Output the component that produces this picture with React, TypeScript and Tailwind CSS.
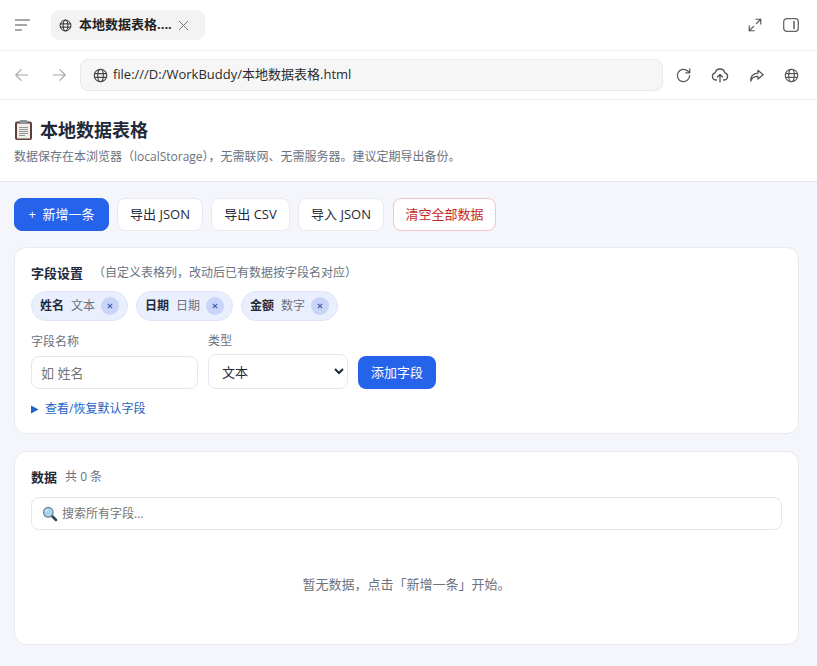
import React from "react";

const Globe = ({ size = 16, className = "" }: { size?: number; className?: string }) => (
  <svg width={size} height={size} viewBox="0 0 16 16" fill="none" stroke="currentColor" strokeWidth="1.2" className={className}>
    <circle cx="8" cy="8" r="6.7" />
    <ellipse cx="8" cy="8" rx="3" ry="6.7" />
    <path d="M1.5 6h13M1.5 10h13" />
  </svg>
);

const Icon = ({ size = 18, children, className = "" }: { size?: number; children: React.ReactNode; className?: string }) => (
  <svg width={size} height={size} viewBox="0 0 18 18" fill="none" stroke="currentColor" strokeWidth="1.3" strokeLinecap="round" strokeLinejoin="round" className={className}>
    {children}
  </svg>
);

const Clipboard = () => (
  <svg width="20" height="22" viewBox="0 0 20 22" className="shrink-0">
    <rect x="1" y="2.5" width="17" height="18.5" rx="2" fill="#5d4037" />
    <rect x="3" y="4.5" width="13" height="15" fill="#f1efe9" />
    <rect x="5.5" y="1" width="8" height="4" rx="1" fill="#8d9399" />
    <path d="M5 8.5h9M5 10.5h9M5 12.5h9M5 14.5h9M5 16.5h6" stroke="#8a8a86" strokeWidth="0.9" />
  </svg>
);

const Magnifier = () => (
  <svg width="16" height="16" viewBox="0 0 16 16" className="shrink-0">
    <path d="M9.5 9.5 14 14" stroke="#37474f" strokeWidth="2.6" strokeLinecap="round" />
    <circle cx="6.3" cy="6.3" r="4.8" fill="#a8d4ee" stroke="#6d8796" strokeWidth="1.3" />
    <path d="M3.6 6a2.8 2.8 0 0 1 2.4-2.4" stroke="#e8f6ff" strokeWidth="1" fill="none" />
  </svg>
);

const Chip = ({ name, type }: { name: string; type: string }) => (
  <div className="flex h-[30px] items-center rounded-full border border-[#dfe5f7] bg-[#eaeffd] pl-[8px] pr-[8px] text-[12px]">
    <b className="font-bold text-[#1f2937]">{name}</b>
    <span className="ml-[7px] text-[#6b7280]">{type}</span>
    <span className="ml-[6px] flex h-[18px] w-[18px] items-center justify-center rounded-full bg-[#c9d5f8] text-[#3b5aa8]">
      <svg width="8" height="8" viewBox="0 0 8 8" stroke="currentColor" strokeWidth="1.1">
        <path d="M1.8 1.8l4.4 4.4M6.2 1.8 1.8 6.2" />
      </svg>
    </span>
  </div>
);

const Btn = ({ children, className = "" }: { children: React.ReactNode; className?: string }) => (
  <button className={`flex h-[33px] items-center justify-center rounded-[8px] border text-[13px] ${className}`}>{children}</button>
);

export default function App() {
  return (
    <div
      className="flex h-[666px] w-[817px] flex-col overflow-hidden bg-[#f4f6fb] text-[#1f2937]"
      style={{ fontFamily: '"Open Sans", "Noto Sans CJK SC", sans-serif' }}
    >
      <div className="flex h-[51px] shrink-0 items-center border-b border-[#f0f0f0] bg-white pl-[15px] pr-[18px]">
        <svg width="15" height="14" viewBox="0 0 15 14" stroke="#8a8a8a" strokeWidth="1.6" fill="none">
          <path d="M0 2h15M0 7h12M0 12h7" />
        </svg>
        <div className="ml-[21px] flex h-[30px] w-[154px] items-center rounded-[8px] bg-[#f3f3f3] pl-[8px]">
          <Globe size={13} className="text-[#222]" />
          <span className="ml-[7px] text-[13px] font-bold text-[#222]">本地数据表格....</span>
          <svg width="11" height="11" viewBox="0 0 11 11" stroke="#777" strokeWidth="1" className="ml-[6px]">
            <path d="M1 1l9 9M10 1l-9 9" />
          </svg>
        </div>
        <div className="ml-auto flex items-center gap-[20px] text-[#555]">
          <Icon size={16}>
            <path d="M10 2.5h5.5V8M15.5 2.5 10.5 7.5M8 15.5H2.5V10M2.5 15.5l5-5" />
          </Icon>
          <svg width="16" height="14" viewBox="0 0 16 14" fill="none" stroke="#666" strokeWidth="1.3">
            <rect x="0.7" y="0.7" width="14.6" height="12.6" rx="3" />
            <path d="M11 3v8" strokeWidth="1.6" />
          </svg>
        </div>
      </div>

      <div className="flex h-[49px] shrink-0 items-center border-b border-[#ececec] bg-white pl-[14px] pr-[18px]">
        <Icon size={16} className="text-[#a8a8a8]">
          <path d="M15.5 9H2.5M8 3 2 9l6 6" />
        </Icon>
        <Icon size={16} className="ml-[21px] text-[#a8a8a8]">
          <path d="M2.5 9h13M10 3l6 6-6 6" />
        </Icon>
        <div className="ml-[13px] flex h-[32px] w-[585px] items-center rounded-[8px] border border-[#e9e9e9] bg-[#f6f6f6] pl-[12px] text-[13px] text-[#2a2a2a]">
          <Globe size={15} className="text-[#444]" />
          <span className="ml-[5px]">file:///D:/WorkBuddy/本地数据表格.html</span>
        </div>
        <div className="ml-[12px] flex items-center gap-[19px] text-[#555]">
          <Icon size={17}>
            <path d="M15.5 9a6.5 6.5 0 1 1-2-4.7l2 1.9M15.6 2v4.2h-4.2" />
          </Icon>
          <Icon size={18}>
            <path d="M5.5 14H4.8a3.6 3.6 0 0 1-.6-7.1 4.9 4.9 0 0 1 9.6 0 3.6 3.6 0 0 1-.6 7.1h-.7M9 16V8.5M6.5 11 9 8.5l2.5 2.5" />
          </Icon>
          <Icon size={17}>
            <path d="M10.5 3.5 16 8.2l-5.5 4.6V10C6.5 10 4 11.5 3 15c-.3-4.5 2-8 7.5-8.4z" />
          </Icon>
          <Globe size={15} className="text-[#555]" />
        </div>
      </div>

      <div className="h-[82px] shrink-0 border-b border-[#e5e7eb] bg-white px-[14px] pt-[17px]">
        <div className="flex h-[26px] items-center gap-[6px]">
          <Clipboard />
          <h1 className="text-[18px] font-bold leading-[26px] text-[#1f2937]">本地数据表格</h1>
        </div>
        <p className="mt-[6px] text-[12px] leading-[16px] text-[#6b7280]">数据保存在本浏览器（localStorage），无需联网、无需服务器。建议定期导出备份。</p>
      </div>

      <div className="flex flex-col px-[14px] pt-[16px]">
        <div className="flex items-center gap-[8px]">
          <Btn className="w-[95px] border-[#2563eb] bg-[#2563eb] text-white">+&nbsp;&nbsp;新增一条</Btn>
          <Btn className="w-[86px] border-[#e8eaef] bg-white text-[#1f2937]">导出 JSON</Btn>
          <Btn className="w-[79px] border-[#e8eaef] bg-white text-[#1f2937]">导出 CSV</Btn>
          <Btn className="w-[86px] border-[#e8eaef] bg-white text-[#1f2937]">导入 JSON</Btn>
          <Btn className="ml-[1px] w-[103px] border-[#f3c6c9] bg-white text-[#c62828]">清空全部数据</Btn>
        </div>

        <section className="mt-[16px] h-[187px] w-[785px] rounded-[12px] border border-[#e8eaef] bg-white px-[16px] pt-[15px]">
          <div className="flex items-center">
            <h2 className="text-[13px] font-bold leading-[20px]">字段设置</h2>
            <span className="ml-[10px] text-[12px] leading-[20px] text-[#6b7280]">（自定义表格列，改动后已有数据按字段名对应）</span>
          </div>
          <div className="mt-[8px] flex gap-[8px]">
            <Chip name="姓名" type="文本" />
            <Chip name="日期" type="日期" />
            <Chip name="金额" type="数字" />
          </div>
          <div className="mt-[12px] flex items-end gap-[10px]">
            <label className="flex w-[167px] flex-col">
              <span className="text-[12px] leading-[16px] text-[#6b7280]">字段名称</span>
              <input placeholder="如 姓名" className="mt-[6px] h-[33px] rounded-[8px] border border-[#e5e7eb] bg-white px-[9px] text-[13px] placeholder:text-[#757575]" />
            </label>
            <label className="flex w-[140px] flex-col">
              <span className="text-[12px] leading-[16px] text-[#6b7280]">类型</span>
              <select className="mt-[5px] h-[35px] rounded-[8px] border border-[#e5e7eb] bg-white px-[9px] text-[13px]">
                <option>文本</option>
              </select>
            </label>
            <button className="h-[33px] w-[78px] rounded-[8px] bg-[#2563eb] text-[13px] text-white">添加字段</button>
          </div>
          <div className="mt-[12px] flex items-center text-[12px] leading-[16px] text-[#2563c4]">
            <svg width="8" height="9" viewBox="0 0 8 9" fill="currentColor"><path d="M0 .5v8l7.5-4z" /></svg>
            <span className="ml-[6px]">查看/恢复默认字段</span>
          </div>
        </section>

        <section className="mt-[17px] h-[194px] w-[785px] rounded-[12px] border border-[#e8eaef] bg-white px-[16px] pt-[15px]">
          <div className="flex items-center">
            <h2 className="text-[13px] font-bold leading-[20px]">数据</h2>
            <span className="ml-[8px] text-[12px] leading-[20px] text-[#6b7280]">共 0 条</span>
          </div>
          <div className="mt-[10px] flex h-[33px] items-center rounded-[8px] border border-[#e5e7eb] pl-[10px]">
            <Magnifier />
            <input placeholder="搜索所有字段..." className="ml-[4px] flex-1 text-[12px] outline-none placeholder:text-[#757575]" />
          </div>
          <p className="mt-[44px] text-center text-[13px] leading-[20px] text-[#6b7280]">暂无数据，点击「新增一条」开始。</p>
        </section>
      </div>
    </div>
  );
}
